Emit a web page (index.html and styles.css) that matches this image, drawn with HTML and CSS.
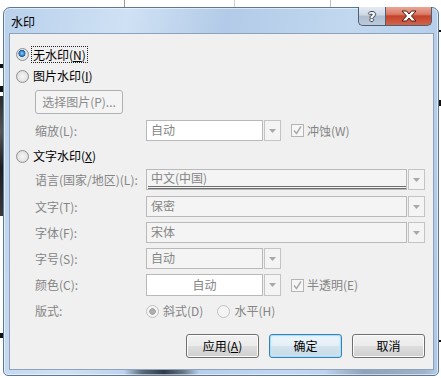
FILE: index.html
```html
<!DOCTYPE html>
<html lang="zh-CN">
<head>
<meta charset="utf-8">
<title>水印</title>
<link rel="stylesheet" href="styles.css">
</head>
<body>
<div class="desktop">
  <div class="grid-line gl1"></div>
  <div class="grid-line gl2"></div>
  <div class="grid-line gl3"></div>
  <div class="bg-photo"></div>
  <div class="bg-mark bm1"></div>
  <div class="bg-mark bm2"></div>
  <div class="bg-mark bm3"></div>
  <div class="bg-mark bm4"></div>
  <div class="bg-mark bm5"></div>
  <div class="bg-mark bm6"></div>

  <div class="window">
    <div class="titlebar"><span class="title">水印</span></div>
    <div class="caps">
      <div class="cap help"><span class="help-glyph">?</span></div>
      <div class="cap close">
        <svg width="16" height="12" viewBox="0 0 16 12"><path d="M1 1 H5.5 L8 4 L10.5 1 H15 L10.5 6 L15 11 H10.5 L8 8 L5.5 11 H1 L5.5 6 Z" fill="#fff" stroke="#4a1a12" stroke-width="1" stroke-linejoin="round"/></svg>
      </div>
    </div>
    <div class="client">
      <div class="radio-row r1">
        <span class="radio on"></span>
        <span class="focus">无水印(<u>N</u>)</span>
      </div>
      <div class="radio-row r2">
        <span class="radio"></span>
        <span class="rlabel">图片水印(<u>I</u>)</span>
      </div>
      <div class="pic-btn">选择图片(P)...</div>
      <div class="field-row fr-scale">
        <span class="label">缩放(L):</span>
        <div class="combo small">
          <div class="field white">自动</div>
          <div class="arrow"><svg width="7" height="4" viewBox="0 0 7 4"><path d="M0 0 H7 L3.5 4 Z" fill="#a8a8a8"/></svg></div>
        </div>
        <span class="check"><svg width="11" height="11" viewBox="0 0 11 11"><path d="M2 5.5 L4.5 8.5 L9 1.5" fill="none" stroke="#a9a9a9" stroke-width="1.4"/></svg></span>
        <span class="clabel">冲蚀(W)</span>
      </div>
      <div class="radio-row r3">
        <span class="radio"></span>
        <span class="rlabel">文字水印(<u>X</u>)</span>
      </div>
      <div class="field-row fr-lang">
        <span class="label">语言(国家/地区)(L):</span>
        <div class="combo big">
          <div class="field lang"><span class="ftext">中文(中国)</span><span class="dbl"></span></div>
          <div class="arrow"><svg width="7" height="4" viewBox="0 0 7 4"><path d="M0 0 H7 L3.5 4 Z" fill="#a8a8a8"/></svg></div>
        </div>
      </div>
      <div class="field-row fr-text">
        <span class="label">文字(T):</span>
        <div class="combo big">
          <div class="field">保密</div>
          <div class="arrow"><svg width="7" height="4" viewBox="0 0 7 4"><path d="M0 0 H7 L3.5 4 Z" fill="#a8a8a8"/></svg></div>
        </div>
      </div>
      <div class="field-row fr-font">
        <span class="label">字体(F):</span>
        <div class="combo big">
          <div class="field">宋体</div>
          <div class="arrow"><svg width="7" height="4" viewBox="0 0 7 4"><path d="M0 0 H7 L3.5 4 Z" fill="#a8a8a8"/></svg></div>
        </div>
      </div>
      <div class="field-row fr-size">
        <span class="label">字号(S):</span>
        <div class="combo small">
          <div class="field">自动</div>
          <div class="arrow"><svg width="7" height="4" viewBox="0 0 7 4"><path d="M0 0 H7 L3.5 4 Z" fill="#a8a8a8"/></svg></div>
        </div>
      </div>
      <div class="field-row fr-color">
        <span class="label">颜色(C):</span>
        <div class="combo small tall">
          <div class="field white center">自动</div>
          <div class="arrow"><svg width="7" height="4" viewBox="0 0 7 4"><path d="M0 0 H7 L3.5 4 Z" fill="#a8a8a8"/></svg></div>
        </div>
        <span class="check"><svg width="11" height="11" viewBox="0 0 11 11"><path d="M2 5.5 L4.5 8.5 L9 1.5" fill="none" stroke="#a9a9a9" stroke-width="1.4"/></svg></span>
        <span class="clabel">半透明(E)</span>
      </div>
      <div class="field-row fr-layout">
        <span class="label">版式:</span>
        <span class="radio dis on"></span>
        <span class="dlabel">斜式(D)</span>
        <span class="radio dis r-h"></span>
        <span class="dlabel">水平(H)</span>
      </div>
      <div class="buttons">
        <div class="btn">应用(<u>A</u>)</div>
        <div class="btn default">确定</div>
        <div class="btn">取消</div>
      </div>
    </div>
  </div>
</div>
</body>
</html>
```
FILE: styles.css
```css
* { box-sizing: border-box; }
html, body { margin: 0; padding: 0; }
body {
  font-family: "Noto Sans CJK SC", "Noto Sans", sans-serif;
  font-size: 12px;
  color: #000;
  background: #fff;
}
u { text-decoration: underline; text-underline-offset: 1px; }

.desktop {
  position: relative;
  width: 441px;
  height: 378px;
  background: #fff;
  overflow: hidden;
}
.grid-line { position: absolute; top: 0; width: 1px; height: 8px; background: #9a9a9a; }
.gl1 { left: 124px; }
.gl2 { left: 234px; background: #d0d0d0; }
.gl3 { left: 330px; background: #c0c0c0; }
.bg-photo {
  position: absolute; left: 0; top: 96px; width: 3px; height: 120px;
  background: linear-gradient(#2a2a2a, #555 30%, #1c1c1c 60%, #3a3a3a);
}
.bg-mark { position: absolute; width: 3px; height: 4px; background: #111; }
.bm1 { left: 0; top: 64px; }
.bm2 { left: 0; top: 86px; height: 6px; }
.bm3 { left: 0; top: 333px; height: 5px; }
.bm4 { left: 438px; top: 30px; height: 2px; }
.bm5 { left: 438px; top: 100px; height: 6px; }
.bm6 { left: 438px; top: 340px; height: 2px; }

.window {
  position: absolute;
  left: 3px;
  top: 7px;
  width: 436px;
  height: 369px;
  border: 1px solid #5d7895;
  border-radius: 7px 7px 5px 5px;
  padding: 0 4px 5px 5px;
  display: flex;
  flex-direction: column;
  background:
    linear-gradient(to right, transparent 120px, #5b6b7c 138px, #2e3a47 160px, #6a7a8a 180px, transparent 195px, transparent 320px, #8fa3b8 360px, #9fb3c8 420px, transparent 432px) 0 100% / 100% 5px no-repeat,
    linear-gradient(100deg, #b9d1ec 0%, #cfe1f4 25%, #b3cbe8 45%, #c2d8f0 70%, #aec8e5 100%);
  box-shadow: inset 0 0 0 1px rgba(255,255,255,0.55);
}
.titlebar {
  height: 25px;
  display: flex;
  align-items: center;
  padding-left: 2px;
  padding-top: 2px;
}
.title { font-size: 12px; line-height: 16px; color: #000; }

.caps {
  position: absolute;
  top: -1px;
  right: 6px;
  display: flex;
}
.cap {
  height: 19px;
  display: flex;
  align-items: center;
  justify-content: center;
  border: 1px solid #4f5f73;
  border-top: none;
}
.help {
  width: 27px;
  border-radius: 0 0 0 5px;
  border-right: none;
  background: linear-gradient(#e4ebf3 0%, #cdd8e4 45%, #aebdcf 50%, #bccadb 100%);
}
.help-glyph {
  font-family: "DejaVu Sans", sans-serif;
  font-weight: bold;
  font-size: 13px;
  line-height: 13px;
  color: #fff;
  text-shadow: 1px 0 0 #3c4656, -1px 0 0 #3c4656, 0 1px 0 #3c4656, 0 -1px 0 #3c4656;
}
.close {
  width: 47px;
  border-radius: 0 0 5px 0;
  background: linear-gradient(#eba695 0%, #da7c67 40%, #c5432b 50%, #d0644a 100%);
}

.client {
  flex: 1;
  border: 1px solid #8ea3bb;
  background: #f0f0f0;
  padding-top: 12px;
  display: flex;
  flex-direction: column;
}

.radio {
  width: 13px;
  height: 13px;
  border-radius: 50%;
  border: 1px solid #8e9094;
  background: radial-gradient(circle at 50% 50%, #f6f6f6 0, #eaeaea 40%, #d4d4d4 100%);
  flex: none;
}
.radio.on {
  background: radial-gradient(circle at 45% 40%, #8fd0f5 0, #3d8fd0 2px, #1c5c9e 3.3px, #e6e6e6 3.8px, #d8d8d8 100%);
}
.radio.dis {
  border-color: #c2c2c2;
  background: #f4f4f4;
}
.radio.dis.on {
  background: radial-gradient(circle, #b4b4b4 0, #a6a6a6 3px, #f4f4f4 3.6px);
}

.radio-row {
  height: 16px;
  display: flex;
  align-items: center;
  padding-left: 6px;
}
.r2 { margin-top: 6px; }
.r3 { margin-top: 7px; }
.focus {
  margin-left: 3px;
  padding: 0 1px;
  outline: 1px dotted #222;
  outline-offset: 0;
  line-height: 15px;
}
.rlabel { margin-left: 4px; line-height: 16px; }

.pic-btn {
  margin-top: 6px;
  margin-left: 25px;
  width: 88px;
  height: 24px;
  border: 1px solid #adb2b5;
  border-radius: 3px;
  background: #f4f4f4;
  color: #8b8b8b;
  display: flex;
  align-items: center;
  justify-content: center;
  line-height: 16px;
}

.field-row {
  display: flex;
  align-items: center;
  padding-left: 25px;
}
.label {
  width: 111px;
  flex: none;
  color: #858585;
  line-height: 16px;
}
.fr-scale { margin-top: 6px; }
.fr-lang { margin-top: 5px; }
.fr-text { margin-top: 6px; }
.fr-font { margin-top: 5px; }
.fr-size { margin-top: 5px; }
.fr-color { margin-top: 5px; }
.fr-layout { margin-top: 7px; height: 16px; }

.combo {
  display: flex;
  gap: 1px;
  height: 21px;
}
.combo.tall { height: 22px; }
.field {
  border: 1px solid #b9b9b9;
  background: #f4f4f4;
  color: #858585;
  padding-left: 4px;
  line-height: 18px;
  display: flex;
  flex-direction: column;
}
.field.white { background: #fff; }
.field.center { align-items: center; justify-content: center; padding-left: 0; }
.small .field { width: 117px; }
.big .field { width: 261px; }
.field.lang { padding-top: 0; }
.ftext { line-height: 15px; height: 15px; }
.dbl {
  display: block;
  height: 3px;
  margin-left: -3px;
  margin-right: 0;
  margin-top: 1px;
  border-top: 1px solid #6f6f6f;
  border-bottom: 1px solid #6f6f6f;
}
.arrow {
  width: 17px;
  border: 1px solid #c4c4c4;
  background: #f4f4f4;
  display: flex;
  align-items: center;
  justify-content: center;
}

.check {
  width: 13px;
  height: 13px;
  margin-left: 10px;
  border: 1px solid #b5b5b5;
  background: #f6f6f6;
  display: flex;
  align-items: center;
  justify-content: center;
  flex: none;
}
.clabel { margin-left: 3px; color: #858585; line-height: 16px; }

.dlabel { margin-left: 4px; color: #858585; line-height: 16px; }
.r-h { margin-left: 14px; }

.buttons {
  margin-top: 15px;
  display: flex;
  justify-content: flex-end;
  gap: 10px;
  padding-right: 8px;
}
.btn {
  width: 73px;
  height: 24px;
  border: 1px solid #707070;
  border-radius: 3px;
  background: linear-gradient(#f2f2f2 0%, #ebebeb 48%, #dddddd 52%, #cfcfcf 100%);
  box-shadow: inset 0 0 0 1px #fbfbfb;
  display: flex;
  align-items: center;
  justify-content: center;
  line-height: 16px;
  color: #000;
}
.btn.default {
  border-color: #3c7fb1;
  box-shadow: inset 0 0 0 1px #a7e0fb, inset 0 0 3px 1px #c7ecfc;
  background: linear-gradient(#eef6fb 0%, #e4eff6 48%, #d4e3ed 52%, #c8dae6 100%);
}
```
